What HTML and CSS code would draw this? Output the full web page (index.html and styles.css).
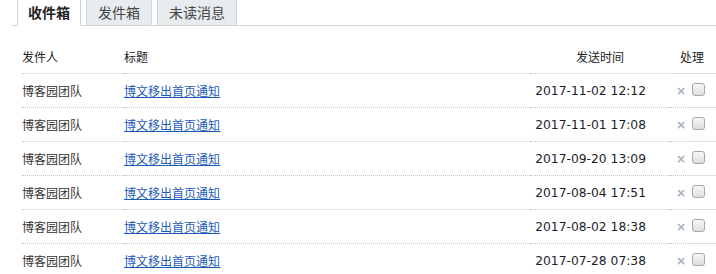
FILE: index.html
```html
<!DOCTYPE html>
<html lang="zh-CN">
<head>
  <meta charset="UTF-8" />
  <title>站内短消息</title>
  <link rel="stylesheet" href="styles.css">
</head>
<body>
  <div class="mailbox">
    <ul class="tabs">
      <li class="tab active">收件箱</li>
      <li class="tab">发件箱</li>
      <li class="tab">未读消息</li>
    </ul>

    <table class="msg-list">
      <thead>
        <tr>
          <th class="col-from">发件人</th>
          <th class="col-title">标题</th>
          <th class="col-time">发送时间</th>
          <th class="col-op" colspan="2">处理</th>
        </tr>
      </thead>
      <tbody>
        <tr>
          <td>博客园团队</td>
          <td><a href="#">博文移出首页通知</a></td>
          <td class="time">2017-11-02 12:12</td>
          <td class="del">×</td>
          <td class="check"><input type="checkbox"></td>
        </tr>
        <tr>
          <td>博客园团队</td>
          <td><a href="#">博文移出首页通知</a></td>
          <td class="time">2017-11-01 17:08</td>
          <td class="del">×</td>
          <td class="check"><input type="checkbox"></td>
        </tr>
        <tr>
          <td>博客园团队</td>
          <td><a href="#">博文移出首页通知</a></td>
          <td class="time">2017-09-20 13:09</td>
          <td class="del">×</td>
          <td class="check"><input type="checkbox"></td>
        </tr>
        <tr>
          <td>博客园团队</td>
          <td><a href="#">博文移出首页通知</a></td>
          <td class="time">2017-08-04 17:51</td>
          <td class="del">×</td>
          <td class="check"><input type="checkbox"></td>
        </tr>
        <tr>
          <td>博客园团队</td>
          <td><a href="#">博文移出首页通知</a></td>
          <td class="time">2017-08-02 18:38</td>
          <td class="del">×</td>
          <td class="check"><input type="checkbox"></td>
        </tr>
        <tr>
          <td>博客园团队</td>
          <td><a href="#">博文移出首页通知</a></td>
          <td class="time">2017-07-28 07:38</td>
          <td class="del">×</td>
          <td class="check"><input type="checkbox"></td>
        </tr>
      </tbody>
    </table>
  </div>
</body>
</html>
```

FILE: styles.css
```css
body {
  margin: 0;
  font-family: "Noto Sans CJK SC", sans-serif;
  font-size: 12px;
  color: #333;
  background: #fff;
}

.mailbox {
  padding-left: 12px;
}

.tabs {
  display: flex;
  gap: 5px;
  margin: -1px 0 0;
  padding: 0 0 0 5px;
  list-style: none;
  border-bottom: 1px solid #cfd6dc;
}

.tab {
  height: 25px;
  line-height: 25px;
  padding: 0 11px;
  margin-bottom: -1px;
  border: 1px solid #cfd6dc;
  background: #e7ecef;
  font-size: 14px;
  color: #444;
}

.tab.active {
  padding: 0 10px;
  background: #fff;
  border-bottom-color: #fff;
  font-weight: bold;
  color: #222;
}

.msg-list {
  width: calc(100% - 10px);
  margin: 14px 0 0 10px;
  border-collapse: collapse;
}

.msg-list th,
.msg-list td {
  height: 33px;
  padding: 0;
  border-bottom: 1px dotted #c8c8c8;
  text-align: left;
  font-weight: normal;
  white-space: nowrap;
}

.msg-list th {
  color: #222;
}

.col-from {
  width: 102px;
}

.col-time {
  width: 140px;
  text-align: center !important;
}

.col-op {
  padding-left: 10px !important;
}

.msg-list thead th.col-op,
.msg-list td.check {
  border-bottom-style: solid;
  border-bottom-color: #dde1e6;
}

.msg-list a {
  color: #1d5bb8;
  text-decoration: underline;
}

.msg-list td.time {
  text-align: right;
  padding-right: 24px;
  font-family: "DejaVu Sans", Verdana, sans-serif;
  font-size: 12.3px;
  color: #1c1c28;
}

.msg-list td.del {
  width: 12px;
  padding-left: 6px;
  font-family: "DejaVu Sans", sans-serif;
  font-size: 12px;
  font-weight: bold;
  color: #a3aebf;
}

.msg-list td.check {
  width: 24px;
  padding-left: 4px;
}

.check input {
  -webkit-appearance: none;
  appearance: none;
  display: block;
  width: 13px;
  height: 13px;
  margin: -2px 0 0;
  border: 1px solid #a7a7a7;
  border-radius: 3px;
  background: linear-gradient(#f7f7f7, #dedede);
}
```
